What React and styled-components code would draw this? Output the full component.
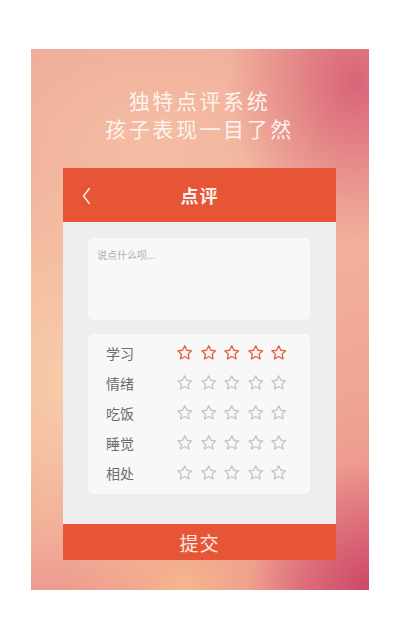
import React, { useState } from 'react';
import styled, { createGlobalStyle } from 'styled-components';

const GlobalStyle = createGlobalStyle`
  html, body {
    margin: 0;
    padding: 0;
    background: #ffffff;
    font-family: "Noto Sans CJK SC", "Noto Sans", sans-serif;
  }
`;

const categories = ['学习', '情绪', '吃饭', '睡觉', '相处'];

const Star = ({ active }) => (
  <StarSvg viewBox="0 0 24 24" $active={active}>
    <polygon points="12,2.5 14.9,8.6 21.5,9.4 16.6,13.9 17.9,20.5 12,17.2 6.1,20.5 7.4,13.9 2.5,9.4 9.1,8.6" />
  </StarSvg>
);

const App = () => {
  const [scores] = useState({ 学习: 5, 情绪: 0, 吃饭: 0, 睡觉: 0, 相处: 0 });

  return (
    <>
      <GlobalStyle />
      <Page>
        <Poster>
          <Headline>
            <HeadLine>独特点评系统</HeadLine>
            <HeadLine>孩子表现一目了然</HeadLine>
          </Headline>

          <Card>
            <CardHeader>
              <BackBtn viewBox="0 0 12 24">
                <polyline points="10,3 3,12 10,21" />
              </BackBtn>
              <HeaderTitle>点评</HeaderTitle>
            </CardHeader>

            <CardBody>
              <CommentBox placeholder="说点什么呗..." />

              <RatingBox>
                {categories.map((name) => (
                  <RatingRow key={name}>
                    <RatingLabel>{name}</RatingLabel>
                    <Stars>
                      {[1, 2, 3, 4, 5].map((n) => (
                        <Star key={n} active={n <= scores[name]} />
                      ))}
                    </Stars>
                  </RatingRow>
                ))}
              </RatingBox>
            </CardBody>

            <SubmitBtn>提交</SubmitBtn>
          </Card>
        </Poster>
      </Page>
    </>
  );
};

const Page = styled.div`
  width: 400px;
  height: 643px;
  padding: 49px 31px 0;
  box-sizing: border-box;
`;

const Poster = styled.div`
  width: 338px;
  height: 541px;
  box-sizing: border-box;
  padding: 37px 33px 0 32px;
  display: flex;
  flex-direction: column;
  background:
    radial-gradient(ellipse 38% 30% at 96% 6%, rgba(216, 96, 118, 0.95), rgba(216, 96, 118, 0) 100%),
    radial-gradient(ellipse 35% 24% at 100% 100%, rgba(204, 68, 100, 0.95), rgba(204, 68, 100, 0) 100%),
    radial-gradient(ellipse 50% 40% at 12% 62%, rgba(248, 208, 172, 0.9), rgba(248, 208, 172, 0) 100%),
    radial-gradient(ellipse 35% 20% at 45% 100%, rgba(246, 184, 142, 0.95), rgba(246, 184, 142, 0) 100%),
    radial-gradient(ellipse 60% 30% at 35% 18%, rgba(246, 192, 166, 0.8), rgba(246, 192, 166, 0) 100%),
    linear-gradient(160deg, #eeaa98 0%, #f2b39c 40%, #f0a592 70%, #e8898a 100%);
`;

const Headline = styled.div`
  color: rgba(255, 248, 244, 0.95);
  text-align: center;
  margin-bottom: 26px;
`;

const HeadLine = styled.div`
  font-size: 21px;
  line-height: 28px;
  letter-spacing: 2.6px;
`;

const Card = styled.div`
  width: 273px;
  display: flex;
  flex-direction: column;
`;

const CardHeader = styled.div`
  height: 54px;
  background: #e65636;
  position: relative;
  display: flex;
  align-items: center;
  justify-content: center;
`;

const BackBtn = styled.svg`
  position: absolute;
  left: 18px;
  top: 18px;
  width: 10px;
  height: 20px;
  fill: none;
  stroke: #fde8e0;
  stroke-width: 1.8;
  stroke-linecap: round;
  stroke-linejoin: round;
`;

const HeaderTitle = styled.div`
  color: #fdf1ec;
  font-size: 18px;
  font-weight: 700;
  letter-spacing: 1px;
`;

const CardBody = styled.div`
  background: #eeeeee;
  padding: 16px 26px 30px 25px;
  display: flex;
  flex-direction: column;
  gap: 14px;
`;

const CommentBox = styled.textarea`
  height: 82px;
  box-sizing: border-box;
  border: none;
  border-radius: 5px;
  background: #f8f8f8;
  resize: none;
  padding: 9px 9px;
  font-family: "Noto Sans CJK SC", sans-serif;
  font-size: 10px;
  color: #666;
  outline: none;
  &::placeholder {
    color: #b0b0b0;
  }
`;

const RatingBox = styled.div`
  background: #f8f8f8;
  border-radius: 5px;
  padding: 4px 0 6px 18px;
  display: flex;
  flex-direction: column;
`;

const RatingRow = styled.div`
  height: 30px;
  display: flex;
  align-items: center;
`;

const RatingLabel = styled.div`
  width: 70px;
  font-size: 14px;
  color: #6c6c6c;
`;

const Stars = styled.div`
  display: flex;
  gap: 6px;
`;

const StarSvg = styled.svg`
  width: 17.5px;
  height: 17.5px;
  fill: none;
  stroke: ${({ $active }) => ($active ? '#e65a3c' : '#c4c4c4')};
  stroke-width: 1.8;
  stroke-linejoin: round;
`;

const SubmitBtn = styled.button`
  height: 36px;
  border: none;
  background: #e65636;
  color: #fde8e0;
  font-family: "Noto Sans CJK SC", sans-serif;
  font-size: 19px;
  letter-spacing: 1px;
  cursor: pointer;
  padding: 0;
`;

export default App;
